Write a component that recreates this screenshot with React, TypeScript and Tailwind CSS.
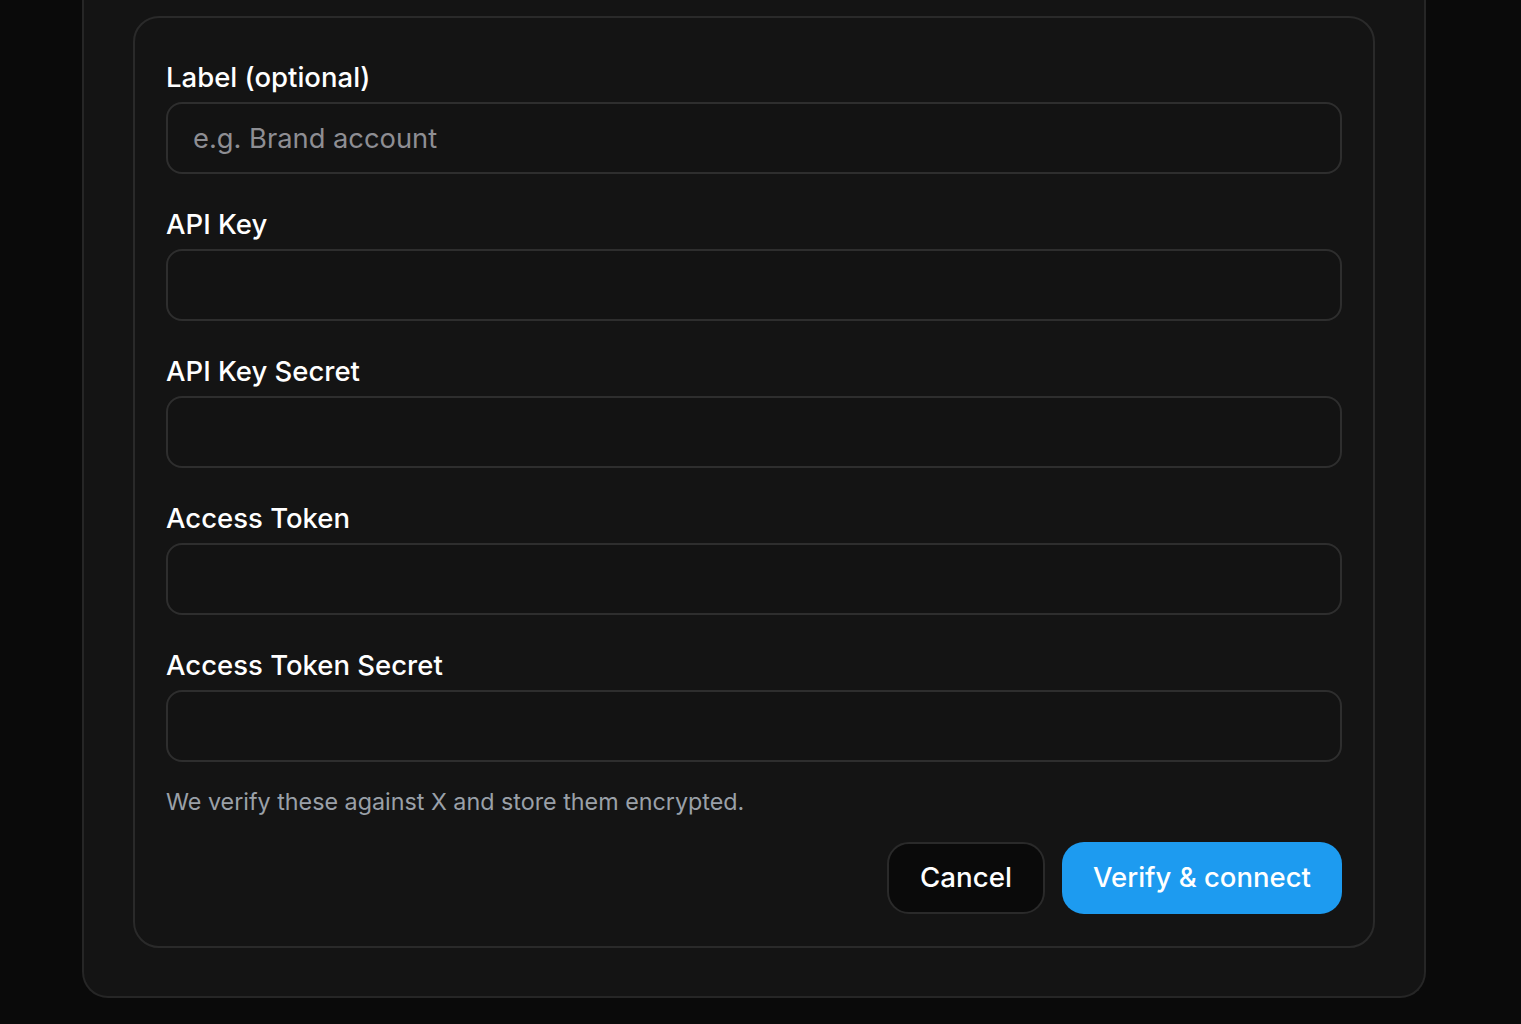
import React from "react";

const fields = [
  { label: "Label (optional)", placeholder: "e.g. Brand account" },
  { label: "API Key", placeholder: "" },
  { label: "API Key Secret", placeholder: "" },
  { label: "Access Token", placeholder: "" },
  { label: "Access Token Secret", placeholder: "" },
];

export default function App() {
  return (
    <div
      className="min-h-[1024px] w-full bg-[#0a0a0a] overflow-hidden"
      style={{ fontFamily: "Inter, 'Noto Sans', sans-serif" }}
    >
      <div className="ml-[82px] w-[1344px] border-x-2 border-b-2 border-[#262626] bg-[#141414] rounded-b-[26px] px-[49px] pt-[16px] pb-[48px]">
        <div className="border-2 border-[#2a2a2a] rounded-[26px] px-[31px] pt-[40px] pb-[32px]">
          <div className="flex flex-col gap-[31px]">
            {fields.map((f) => (
              <div key={f.label} className="flex flex-col gap-[6px]">
                <label className="text-[27.5px] leading-[38px] font-medium text-white">
                  {f.label}
                </label>
                <input
                  placeholder={f.placeholder}
                  className="h-[72px] w-full rounded-[16px] border-2 border-[#2e2e2e] bg-[#131313] px-[25px] text-[27.3px] text-white placeholder:text-[#8e8e93] outline-none"
                />
              </div>
            ))}
          </div>
          <p className="mt-[22px] text-[23.3px] leading-[36px] text-[#9aa0a8]">
            We verify these against X and store them encrypted.
          </p>
          <div className="mt-[22px] flex justify-end gap-[17px]">
            <button className="h-[72px] w-[158px] rounded-[22px] border-2 border-[#2a2a2a] bg-[#0a0a0a] text-[27.7px] font-medium text-white">
              Cancel
            </button>
            <button className="h-[72px] w-[280px] rounded-[22px] bg-[#1d9bf0] text-[27.5px] font-medium text-white">
              Verify &amp; connect
            </button>
          </div>
        </div>
      </div>
    </div>
  );
}
